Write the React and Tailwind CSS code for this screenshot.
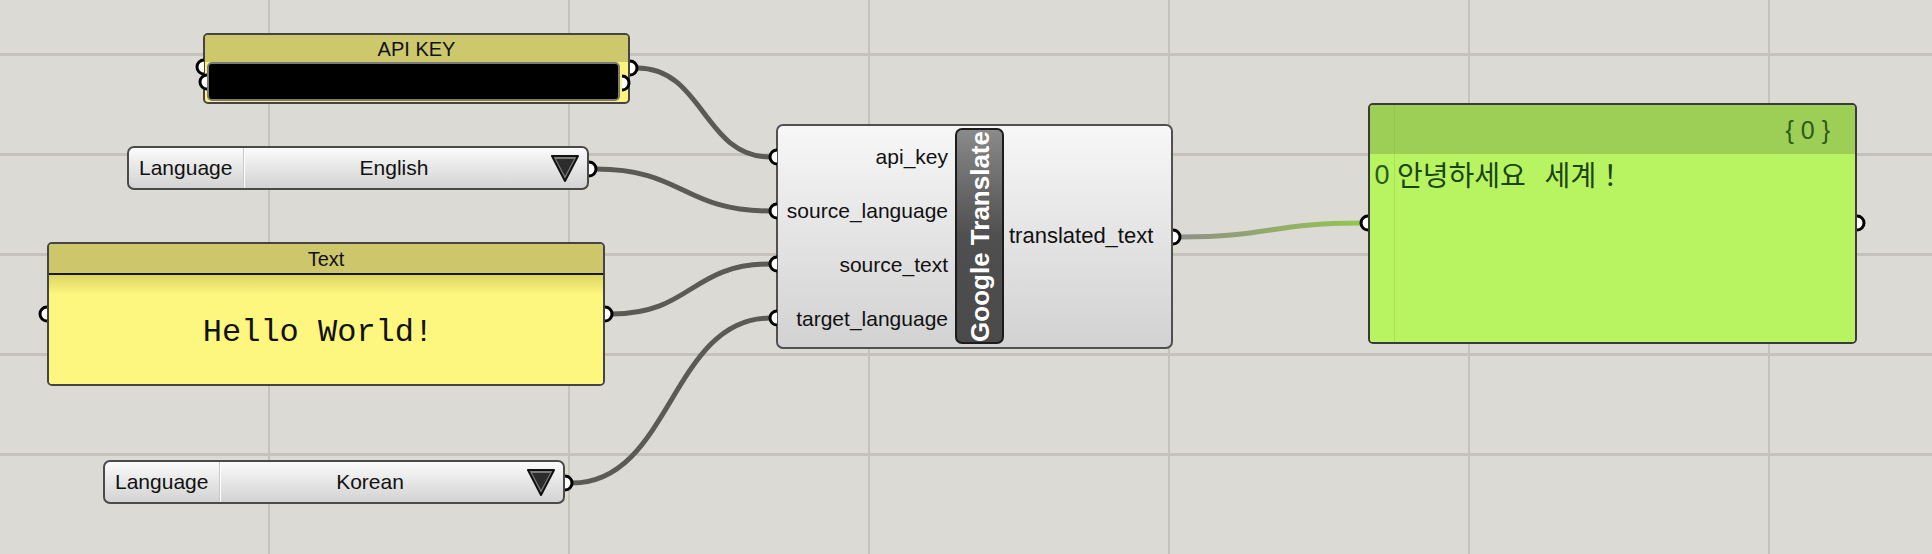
import React from 'react'

// Grasshopper-style canvas: Google Translate definition

const UI = { fontFamily: '"Liberation Sans", Arial, sans-serif' }
const MONO = { fontFamily: '"Liberation Mono", "Courier New", monospace' }
const KR = { fontFamily: '"Noto Sans CJK KR", "Noto Sans", sans-serif' }

function wire(x1, y1, x2, y2) {
  const k = (x2 - x1) * 0.5
  return `M ${x1} ${y1} C ${x1 + k} ${y1}, ${x2 - k} ${y2}, ${x2} ${y2}`
}

const R = 7
const ports = [
  [204, 67, -1], [207, 82, -1], [630, 68, 1], [622, 83, 1],
  [589, 169, 1],
  [47, 314, -1], [605, 314, 1],
  [565, 483, 1],
  [777, 157, -1], [777, 211, -1], [777, 264, -1], [777, 318, -1],
  [1173, 237, 1],
  [1368, 223, -1], [1857, 223, 1],
]

function Port({ x, y, dir }) {
  const d = `M ${x} ${y - R} A ${R} ${R} 0 0 ${dir > 0 ? 1 : 0} ${x} ${y + R}`
  return <path d={d} fill="#ffffff" stroke="#000000" strokeWidth="3" />
}

function Triangle() {
  return (
    <svg width="28" height="27" viewBox="0 0 28 27">
      <polygon points="1,1 27,1 14,26" fill="#7a7a7a" stroke="#111" strokeWidth="2" strokeLinejoin="round" />
      <polygon points="5,4 23,4 14,21" fill="#2c2c2c" />
    </svg>
  )
}

function Dropdown({ className, value }) {
  return (
    <div className={`absolute flex items-center h-[44px] w-[462px] rounded-[7px] border-2 border-[#4a4a4a] bg-gradient-to-b from-[#fbfbfb] via-[#e6e6e6] to-[#d3d3d3] text-[21px] text-[#111] ${className}`} style={UI}>
      <div className="w-[114px] pl-[10px] shrink-0">Language</div>
      <div className="w-[2px] self-stretch bg-[#c9c9c9] border-r border-white" />
      <div className="flex-1 text-center">{value}</div>
      <div className="w-[44px] flex items-center justify-center shrink-0">
        <Triangle />
      </div>
    </div>
  )
}

export default function App() {
  const vlines = [269, 569, 869, 1169, 1469, 1769]
  const hlines = [54, 154, 254, 354, 454]
  return (
    <div className="relative w-[1932px] h-[554px] overflow-hidden bg-[#dcdad4]">
      {/* grid + wires */}
      <svg className="absolute inset-0" width="1932" height="554">
        {vlines.map(x => <rect key={'v' + x} x={x - 1} y="0" width="2" height="554" fill="#c5c2bc" />)}
        {hlines.map(y => <rect key={'h' + y} x="0" y={y - 1} width="1932" height="3" fill="#c5c2bc" />)}
        <defs>
          <linearGradient id="out" x1="1180" y1="0" x2="1361" y2="0" gradientUnits="userSpaceOnUse">
            <stop offset="0" stopColor="#8f9188" />
            <stop offset="1" stopColor="#94c64f" />
          </linearGradient>
        </defs>
        <g fill="none" stroke="#5b5a56" strokeWidth="5">
          <path d={wire(637, 68, 770, 157)} />
          <path d={wire(596, 169, 770, 211)} />
          <path d={wire(612, 314, 770, 264)} />
          <path d={wire(572, 483, 770, 318)} />
        </g>
        <path d={wire(1180, 237, 1361, 223)} fill="none" stroke="url(#out)" strokeWidth="5" />
      </svg>

      {/* API KEY panel */}
      <div className="absolute left-[203px] top-[33px] w-[427px] h-[71px] rounded-[5px] border-2 border-[#444] bg-[#fbf37c] overflow-hidden flex flex-col" style={UI}>
        <div className="h-[27px] shrink-0 bg-[#cdc86c] text-center text-[20px] leading-[28px] text-[#111]">API KEY</div>
        <div className="flex-1 ml-[2px] mr-[8px] mb-[1px] rounded-[5px] border-2 border-[#7a7a7a] bg-black" />
      </div>

      <Dropdown className="left-[127px] top-[146px]" value="English" />

      {/* Text panel */}
      <div className="absolute left-[47px] top-[242px] w-[558px] h-[144px] rounded-[5px] border-2 border-[#444] overflow-hidden flex flex-col" style={UI}>
        <div className="h-[31px] shrink-0 bg-[#cdc66a] border-b-2 border-[#1a1a1a] text-center text-[20px] leading-[30px] text-[#111]">Text</div>
        <div className="flex-1 flex items-center justify-center bg-[linear-gradient(to_bottom,#ded663_0px,#fdf67f_20px,#fdf67f_100%)] pt-[6px] pr-[16px]">
          <span className="text-[32px] text-[#111]" style={MONO}>Hello World!</span>
        </div>
      </div>

      <Dropdown className="left-[103px] top-[460px]" value="Korean" />

      {/* Google Translate component */}
      <div className="absolute left-[776px] top-[124px] w-[397px] h-[225px] rounded-[7px] border-2 border-[#505050] bg-gradient-to-b from-[#f7f7f7] via-[#e4e4e4] to-[#d2d2d2] flex text-[22px] text-[#111]" style={UI}>
        <div className="w-[172px] flex flex-col justify-center gap-[31px] pr-[2px] pt-[2px] text-right text-[21px] leading-[23px]">
          <div>api_key</div>
          <div>source_language</div>
          <div>source_text</div>
          <div>target_language</div>
        </div>
        <div className="mt-[2px] mb-[3px] ml-[5px] w-[49px] rounded-[7px] border-2 border-[#1c1c1c] bg-gradient-to-b from-[#8a8a8a] via-[#4f4f4f] to-[#4a4a4a] flex items-center justify-center">
          <span className="[writing-mode:vertical-rl] rotate-180 text-white font-bold text-[26px] leading-none">Google Translate</span>
        </div>
        <div className="flex-1 flex items-center pl-[5px] pb-[2px]">translated_text</div>
      </div>

      {/* Output panel */}
      <div className="absolute left-[1368px] top-[103px] w-[489px] h-[241px] rounded-[5px] border-2 border-[#3a3a3a] overflow-hidden flex flex-col" style={UI}>
        <div className="h-[49px] shrink-0 bg-[#9dcf56] flex">
          <div className="w-[25px] border-r border-[#93c650]" />
          <div className="flex-1 flex items-center justify-end pr-[25px] pt-[2px] text-[25px] text-[#2f5a1d] whitespace-pre">{'{ 0 }'}</div>
        </div>
        <div className="flex-1 bg-[#b8f462] flex">
          <div className="w-[25px] border-r border-[#a8e058] pt-[4px] text-center text-[27px] leading-[34px] text-[#2f5a1d]">0</div>
          <div className="flex-1 pl-[2px] pt-[1px] text-[28px] leading-[38px] text-[#1a4412] whitespace-pre" style={KR}>안녕하세요   세계！</div>
        </div>
      </div>

      {/* ports */}
      <svg className="absolute inset-0 pointer-events-none" width="1932" height="554">
        {ports.map(([x, y, dir], i) => <Port key={i} x={x} y={y} dir={dir} />)}
      </svg>
    </div>
  )
}
